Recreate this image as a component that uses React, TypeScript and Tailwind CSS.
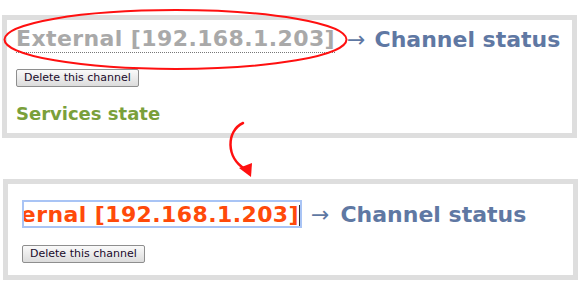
import React from 'react';

const font = { fontFamily: '"DejaVu Sans", Verdana, sans-serif' };

const DeleteButton: React.FC = () => (
  <button className="h-[18px] px-[7px] border border-[#8e8e8e] rounded-[2px] bg-gradient-to-b from-[#fafafa] to-[#dcdcdc] text-[11px] leading-none text-[#1a0a2a]">
    Delete this channel
  </button>
);

const App: React.FC = () => {
  return (
    <div className="relative w-[581px] h-[286px] bg-white overflow-hidden" style={font}>
      {/* Before: channel title as plain heading */}
      <div className="mt-[15px] ml-[2px] w-[575px] h-[123px] border-[5px] border-[#dedede] pl-[9px] pt-[4px]">
        <div className="flex items-center h-[30px] font-bold text-[22px] whitespace-nowrap">
          <span className="text-[#a9a9a9] tracking-[0.4px] border-b border-dotted border-[#777] leading-[26px]">External [192.168.1.203]</span>
          <span className="ml-[12px] text-[#5f78a3] font-normal text-[22px]">→</span>
          <span className="ml-[9px] text-[#5f78a3]">Channel status</span>
        </div>
        <div className="mt-[10px]">
          <DeleteButton />
        </div>
        <div className="mt-[12px] text-[18px] font-bold text-[#7aa03b]">Services state</div>
      </div>

      {/* After: title being edited */}
      <div className="mt-[41px] ml-[3px] w-[575px] h-[101px] border-[5px] border-[#dedede] pl-[14px] pt-[16px]">
        <div className="flex items-center h-[28px] font-bold text-[22px] whitespace-nowrap">
          <div className="relative w-[280px] h-[28px] border-2 border-[#a9c4f5] flex justify-end items-center overflow-hidden">
            <span className="text-[#ff4a0a] tracking-[0.4px] pr-[1px]">ernal [192.168.1.203]</span>
            <span className="absolute right-0 top-[3px] w-[1px] h-[24px] bg-[#333]" />
          </div>
          <span className="ml-[9px] text-[#5f78a3] font-normal text-[22px]">→</span>
          <span className="ml-[11px] text-[#5f78a3]">Channel status</span>
        </div>
        <div className="mt-[12px]">
          <DeleteButton />
        </div>
      </div>

      {/* Annotations */}
      <svg className="absolute left-0 top-0 pointer-events-none" width="581" height="286">
        <ellipse cx="175.5" cy="39.5" rx="171" ry="29.5" fill="none" stroke="#ff1010" strokeWidth="2" />
        <path d="M243 123 C226 131 226 158 245 169" fill="none" stroke="#ff1010" strokeWidth="2.5" strokeLinecap="round" />
        <polygon points="239,168 252,163 251,177" fill="#ff1010" />
      </svg>
    </div>
  );
};

export default App;
